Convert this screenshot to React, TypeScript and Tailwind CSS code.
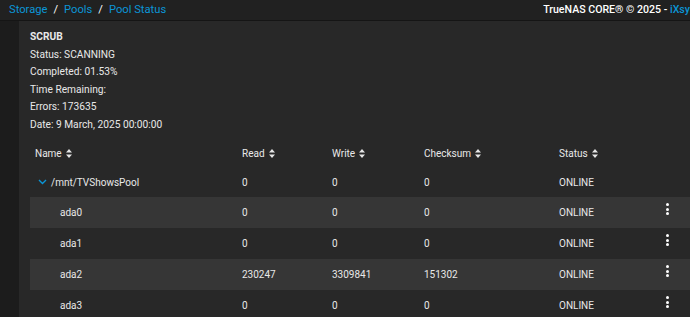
const rows = [
  { name: "ada0", read: "0", write: "0", checksum: "0", status: "ONLINE" },
  { name: "ada1", read: "0", write: "0", checksum: "0", status: "ONLINE" },
  { name: "ada2", read: "230247", write: "3309841", checksum: "151302", status: "ONLINE" },
  { name: "ada3", read: "0", write: "0", checksum: "0", status: "ONLINE" },
];

const cols = "grid grid-cols-[207px_90px_92px_135px_109px_1fr] items-center";

function SortIcon() {
  return (
    <svg width="6" height="9" viewBox="0 0 6 9" className="ml-[4px] inline-block">
      <path d="M3 0 L6 3.5 L0 3.5 Z M3 9 L6 5.5 L0 5.5 Z" fill="#e6e6e6" />
    </svg>
  );
}

function Kebab() {
  return (
    <div className="-mt-[7px] flex flex-col items-center gap-[1.5px]">
      <span className="h-[3px] w-[3px] rounded-full bg-white" />
      <span className="h-[3px] w-[3px] rounded-full bg-white" />
      <span className="h-[3px] w-[3px] rounded-full bg-white" />
    </div>
  );
}

export default function App() {
  return (
    <div
      className="h-[317px] w-[690px] overflow-hidden bg-[#1c1c1c] text-[#e8e8e8]"
      style={{ fontFamily: "Roboto, 'Liberation Sans', sans-serif" }}
    >
      <div className="flex h-[21px] items-center justify-between border-b border-[#151515] bg-[#212121] pl-[9px]">
        <div className="flex items-center text-[11.2px] text-[#0b95d6]">
          <span>Storage</span>
          <span className="mx-[6px] text-white">/</span>
          <span>Pools</span>
          <span className="mx-[6px] text-white">/</span>
          <span>Pool Status</span>
        </div>
        <div className="whitespace-nowrap text-[10.6px] font-medium text-white">
          TrueNAS CORE® © 2025 - <span className="text-[#0b95d6]">iXsy</span>
        </div>
      </div>

      <div className="ml-[19px] h-full bg-[#282828] pl-[11px] pt-[7px]">
        <div className="text-[10.2px] leading-[17.6px]">
          <div className="font-bold">SCRUB</div>
          <div>Status: SCANNING</div>
          <div>Completed: 01.53%</div>
          <div>Time Remaining:</div>
          <div>Errors: 173635</div>
          <div>Date: 9 March, 2025 00:00:00</div>
        </div>

        <div className="mt-[6px] w-[700px] text-[10px]">
          <div className={`${cols} h-[28px] pl-[5px]`}>
            {["Name", "Read", "Write", "Checksum", "Status"].map((h) => (
              <div key={h} className="flex items-center">
                {h}
                <SortIcon />
              </div>
            ))}
          </div>

          <div className={`${cols} h-[29.5px] pl-[5px]`}>
            <div className="flex items-center">
              <svg width="9" height="6" viewBox="0 0 9 6" className="ml-[3px] mr-[4px]">
                <path d="M1 1 L4.5 4.5 L8 1" stroke="#0b95d6" strokeWidth="1.4" fill="none" />
              </svg>
              /mnt/TVShowsPool
            </div>
            <div>0</div>
            <div>0</div>
            <div>0</div>
            <div>ONLINE</div>
            <div />
          </div>

          {rows.map((r, i) => (
            <div
              key={r.name}
              className={`${cols} h-[31px] pl-[5px] ${i % 2 === 0 ? "bg-[#363636]" : ""}`}
            >
              <div className="pl-[25px]">{r.name}</div>
              <div>{r.read}</div>
              <div>{r.write}</div>
              <div>{r.checksum}</div>
              <div>{r.status}</div>
              <div className="w-[3px] translate-x-[-2px]">
                <Kebab />
              </div>
            </div>
          ))}
        </div>
      </div>
    </div>
  );
}
